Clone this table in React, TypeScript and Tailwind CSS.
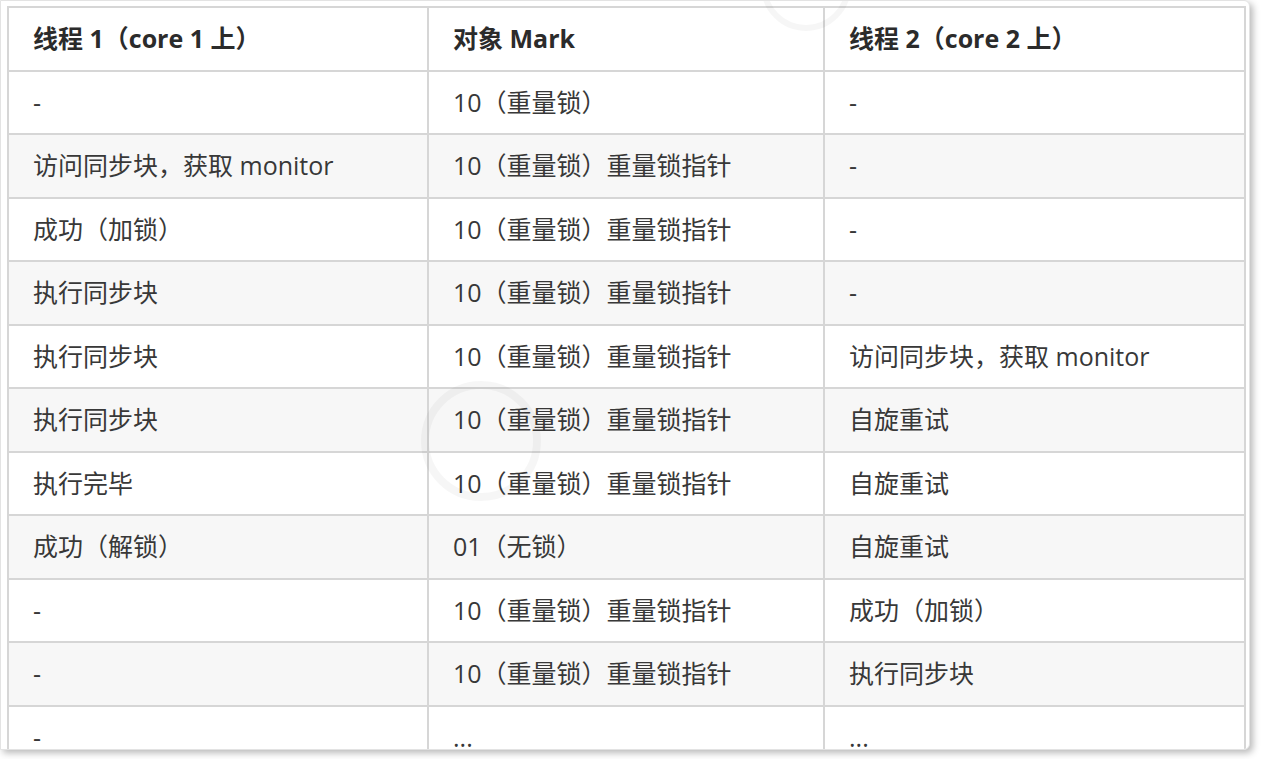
const rows: [string, string, string][] = [
  ["-", "10（重量锁）", "-"],
  ["访问同步块，获取 monitor", "10（重量锁）重量锁指针", "-"],
  ["成功（加锁）", "10（重量锁）重量锁指针", "-"],
  ["执行同步块", "10（重量锁）重量锁指针", "-"],
  ["执行同步块", "10（重量锁）重量锁指针", "访问同步块，获取 monitor"],
  ["执行同步块", "10（重量锁）重量锁指针", "自旋重试"],
  ["执行完毕", "10（重量锁）重量锁指针", "自旋重试"],
  ["成功（解锁）", "01（无锁）", "自旋重试"],
  ["-", "10（重量锁）重量锁指针", "成功（加锁）"],
  ["-", "10（重量锁）重量锁指针", "执行同步块"],
  ["-", "...", "..."],
];

const head = ["线程 1（core 1 上）", "对象 Mark", "线程 2（core 2 上）"];

function Row({ cells, bold, gray }: { cells: string[]; bold?: boolean; gray?: boolean }) {
  return (
    <div
      className={`grid grid-cols-[420px_396px_1fr] h-[63.5px] border-b-2 border-[#d6d6d6] ${
        gray ? "bg-[#f7f7f7]" : "bg-white"
      }`}
    >
      {cells.map((c, i) => (
        <div
          key={i}
          className={`flex items-center pl-6 whitespace-nowrap ${
            i < 2 ? "border-r-2 border-[#d6d6d6]" : ""
          } ${bold ? "font-bold text-[#2b2b2b]" : "font-normal"}`}
        >
          {c}
        </div>
      ))}
    </div>
  );
}

export default function App() {
  return (
    <div className="w-[1261px] h-[759px] bg-white overflow-hidden">
      <div className="relative w-[1250px] h-[750px] bg-white rounded-r-md border border-[#e3e3e3] shadow-[3px_3px_7px_rgba(0,0,0,0.28)] overflow-hidden pt-[5px] pl-[6px]">
        <div
          className="w-[1239px] border-x-2 border-t-2 border-[#d6d6d6] text-[25px] leading-none text-[#383838] [text-spacing-trim:space-all]"
          style={{ fontFamily: '"Open Sans", "Noto Sans CJK SC", sans-serif' }}
        >
          <Row cells={head} bold />
          {rows.map((r, i) => (
            <Row key={i} cells={r} gray={i % 2 === 1} />
          ))}
        </div>

        {/* faint watermark rings */}
        <div className="pointer-events-none absolute left-[760px] top-[-60px] w-[90px] h-[90px] rounded-full border-[6px] border-black/[0.035]" />
        <div className="pointer-events-none absolute left-[420px] top-[380px] w-[120px] h-[120px] rounded-full border-[8px] border-black/[0.035]" />
      </div>
    </div>
  );
}
